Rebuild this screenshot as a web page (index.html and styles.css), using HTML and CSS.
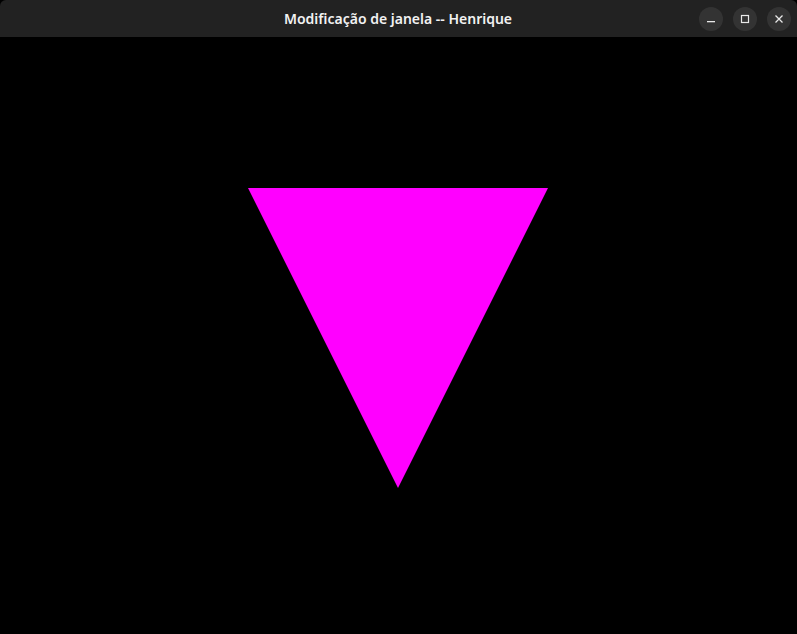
FILE: index.html
```html
<!DOCTYPE html>
<html>
<head>
<meta charset="utf-8">
<link rel="stylesheet" href="styles.css">
</head>
<body>
<div class="window">
  <header class="titlebar">
    <div class="title">Modificação de janela -- Henrique</div>
    <div class="controls">
      <button class="btn" aria-label="minimize">
        <svg width="10" height="10" viewBox="0 0 10 10"><rect x="1" y="7" width="8" height="1.3" fill="#e8e8e8"/></svg>
      </button>
      <button class="btn" aria-label="maximize">
        <svg width="10" height="10" viewBox="0 0 10 10"><rect x="1.5" y="1.5" width="7" height="7" fill="none" stroke="#e8e8e8" stroke-width="1.2"/></svg>
      </button>
      <button class="btn" aria-label="close">
        <svg width="10" height="10" viewBox="0 0 10 10"><path d="M1.5 1.5 L8.5 8.5 M8.5 1.5 L1.5 8.5" stroke="#e8e8e8" stroke-width="1.3"/></svg>
      </button>
    </div>
  </header>
  <main class="canvas">
    <svg class="scene" width="797" height="597" viewBox="0 0 797 597">
      <polygon points="248,151 548,151 398,451" fill="#ff00ff"/>
    </svg>
  </main>
</div>
</body>
</html>
```
FILE: styles.css
```css
html, body {
  margin: 0;
  padding: 0;
  background: #000;
  width: 797px;
  height: 634px;
  overflow: hidden;
}
.window {
  display: flex;
  flex-direction: column;
  width: 797px;
  height: 634px;
}
.titlebar {
  position: relative;
  height: 37px;
  background: #222222;
  border-radius: 6px 6px 0 0;
  display: flex;
  align-items: center;
  justify-content: center;
  flex: none;
}
.title {
  font-family: "Noto Sans", "DejaVu Sans", sans-serif;
  font-weight: 600;
  font-size: 14px;
  color: #f2f2f2;
  letter-spacing: 0;
  margin-left: -1px;
}
.controls {
  position: absolute;
  right: 6px;
  top: 7px;
  display: flex;
  gap: 10px;
}
.btn {
  width: 24px;
  height: 24px;
  border-radius: 50%;
  border: none;
  padding: 0;
  background: #333333;
  display: flex;
  align-items: center;
  justify-content: center;
}
.canvas {
  flex: 1;
  background: #000;
}
.scene {
  display: block;
}
```
